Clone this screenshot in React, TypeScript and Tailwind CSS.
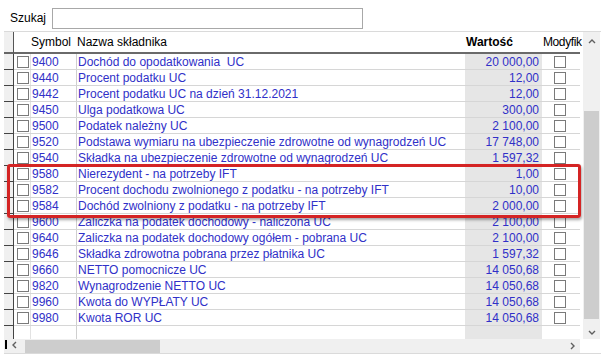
import React from "react";

const rows: [string, string, string][] = [
  ["9400", "Dochód do opodatkowania  UC", "20 000,00"],
  ["9440", "Procent podatku UC", "12,00"],
  ["9442", "Procent podatku UC na dzień 31.12.2021", "12,00"],
  ["9450", "Ulga podatkowa UC", "300,00"],
  ["9500", "Podatek należny UC", "2 100,00"],
  ["9520", "Podstawa wymiaru na ubezpieczenie zdrowotne od wynagrodzeń UC", "17 748,00"],
  ["9540", "Składka na ubezpieczenie zdrowotne od wynagrodzeń UC", "1 597,32"],
  ["9580", "Nierezydent - na potrzeby IFT", "1,00"],
  ["9582", "Procent dochodu zwolnionego z podatku - na potrzeby IFT", "10,00"],
  ["9584", "Dochód zwolniony z podatku - na potrzeby IFT", "2 000,00"],
  ["9600", "Zaliczka na podatek dochodowy - naliczona UC", "2 100,00"],
  ["9640", "Zaliczka na podatek dochodowy ogółem - pobrana UC", "2 100,00"],
  ["9646", "Składka zdrowotna pobrana przez płatnika UC", "1 597,32"],
  ["9660", "NETTO pomocnicze UC", "14 050,68"],
  ["9820", "Wynagrodzenie NETTO UC", "14 050,68"],
  ["9960", "Kwota do WYPŁATY UC", "14 050,68"],
  ["9980", "Kwota ROR UC", "14 050,68"],
];

function Box() {
  return <div className="w-[12px] h-[12px] border border-[#7a7a7a] bg-white" />;
}

function Chevron({ dir }: { dir: "up" | "down" | "left" | "right" }) {
  const d =
    dir === "up"
      ? "M1 5 L4 2 L7 5"
      : dir === "down"
      ? "M1 2 L4 5 L7 2"
      : dir === "left"
      ? "M5 1 L2 4 L5 7"
      : "M2 1 L5 4 L2 7";
  return (
    <svg width="8" height="8" viewBox="0 0 8 8">
      <path d={d} fill="none" stroke="#606060" strokeWidth="1.4" />
    </svg>
  );
}

export default function App() {
  return (
    <div className="w-[605px] h-[359px] bg-white relative overflow-hidden text-[12px] leading-[14px] text-black font-['Liberation_Sans',Arial,sans-serif]">
      {/* search bar */}
      <div className="h-[31px] flex items-start pt-[8px]">
        <span className="ml-[10px] mt-[3px]">Szukaj</span>
        <div className="ml-[6px] w-[311px] h-[21px] border border-[#a8a8a8] bg-white" />
      </div>

      {/* grid */}
      <div className="ml-[4px] w-[597px] h-[323px] border-t border-b border-[#dadada] flex flex-col">
        <div className="flex h-[307px]">
          {/* table */}
          <div className="w-[576px] flex flex-col">
            {/* header */}
            <div className="flex h-[22px]">
              <div className="w-[10px] bg-[#f0f0f0] border-r border-[#555] border-b-2 border-b-[#666]" />
              <div className="flex-1 flex border-b-2 border-[#6a6a6a] items-center">
                <div className="w-[16px]" />
                <div className="w-[46px] pl-[1px]">Symbol</div>
                <div className="w-[389px] pl-[1px]">Nazwa składnika</div>
                <div className="w-[77px] pl-[1px] font-bold">Wartość</div>
                <div className="w-[37px] whitespace-nowrap pl-[1px] tracking-[-0.4px]">Modyfik</div>
              </div>
            </div>
            {/* rows */}
            {rows.map(([sym, name, val]) => (
              <div key={sym} className="flex h-[16px]">
                <div className="w-[10px] bg-[#f0f0f0] border-r border-[#444] border-b border-b-[#444]" />
                <div className="flex-1 flex border-b border-[#d6d6d6] text-[#3030c8]">
                  <div className="w-[16px] flex items-center justify-center pl-[1px]">
                    <Box />
                  </div>
                  <div className="w-[46px] border-l border-[#e2e2e2] pl-[1px] flex items-center">{sym}</div>
                  <div className="w-[389px] border-l border-[#cfcfcf] pl-[1px] flex items-center whitespace-pre overflow-hidden">
                    {name}
                  </div>
                  <div className="w-[77px] bg-[#e6e6e6] flex items-center justify-end pr-[3px]">{val}</div>
                  <div className="w-[37px] flex items-center justify-center pr-[2px]">
                    <Box />
                  </div>
                </div>
              </div>
            ))}
            {/* empty partial row */}
            <div className="flex h-[13px]">
              <div className="w-[10px] bg-[#f0f0f0] border-r border-[#444]" />
              <div className="flex-1 flex">
                <div className="w-[16px]" />
                <div className="w-[46px] border-l border-[#e2e2e2]" />
                <div className="w-[389px] border-l border-[#cfcfcf]" />
                <div className="w-[77px] bg-[#e6e6e6]" />
                <div className="w-[37px]" />
              </div>
            </div>
          </div>
          <div className="w-[3px]" />
          {/* vertical scrollbar */}
          <div className="w-[17px] bg-[#f0f0f0] flex flex-col items-center">
            <div className="h-[17px] flex items-center justify-center mt-[1px]">
              <Chevron dir="up" />
            </div>
            <div className="h-[61px]" />
            <div className="w-[15px] h-[208px] bg-[#cdcdcd]" />
            <div className="flex-1 flex items-end pb-[2px]">
              <Chevron dir="down" />
            </div>
          </div>
        </div>
        {/* horizontal scrollbar */}
        <div className="flex h-[15px]">
          <div className="w-[576px] bg-[#f0f0f0] flex items-center">
            <div className="w-[2px] h-[9px] bg-black ml-[1px] mb-[3px]" />
            <div className="w-[16px] flex justify-center mb-[2px]">
              <Chevron dir="left" />
            </div>
            <div className="ml-[2px] w-[135px] h-[13px] bg-[#cdcdcd]" />
            <div className="flex-1" />
            <div className="w-[12px] flex justify-center mr-[1px]">
              <Chevron dir="right" />
            </div>
          </div>
          <div className="flex-1 bg-white" />
        </div>
      </div>

      {/* red highlight overlay */}
      <div className="absolute left-[7px] top-[164px] w-[574px] h-[54px] border-[3px] border-[#d42424] rounded-[3px] shadow-[1px_2px_3px_rgba(0,0,0,0.35)]" />
    </div>
  );
}
